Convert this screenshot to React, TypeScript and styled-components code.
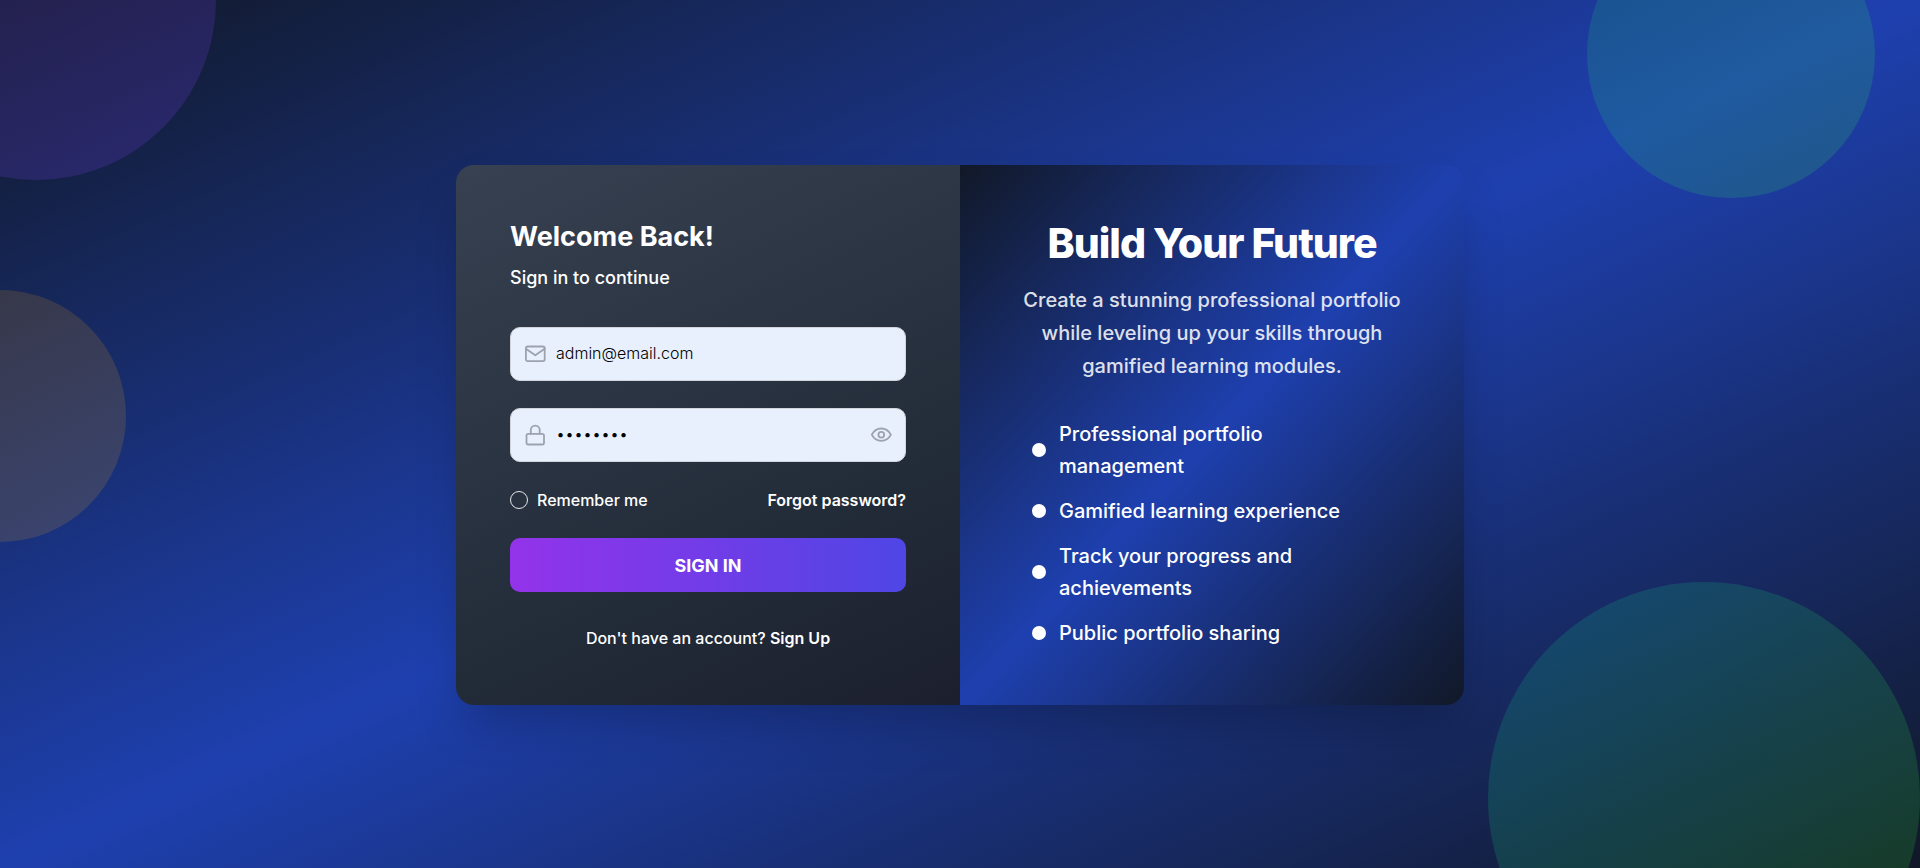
import { useState } from "react";
import styled, { createGlobalStyle } from "styled-components";

const GlobalStyle = createGlobalStyle`
  *, *::before, *::after { box-sizing: border-box; }
  body { margin: 0; font-family: Inter, "Liberation Sans", sans-serif; font-size: 18px; font-weight: 500; color: #fff; background: #111827; }
  h1, h2, p, ul { margin: 0; padding: 0; }
  button, input { font-family: inherit; }
`;

const Page = styled.div`
  position: relative;
  display: flex;
  align-items: center;
  justify-content: center;
  min-height: 100vh;
  padding: 20px 18px 18px;
  overflow: hidden;
  background: linear-gradient(to bottom right, #111827, #1e40af, #111827);
`;

const Orb = styled.div<{ $size: number; $from: string; $to: string }>`
  position: absolute;
  width: ${(p) => p.$size}px;
  height: ${(p) => p.$size}px;
  border-radius: 50%;
  background: linear-gradient(to bottom right, ${(p) => p.$from}, ${(p) => p.$to});
`;
const PurpleOrb = styled(Orb)` top: -180px; left: -144px; `;
const AmberOrb = styled(Orb)` top: calc(100% / 3 + 1px); left: -126px; `;
const TealOrb = styled(Orb)` top: -90px; right: 45px; `;
const GreenOrb = styled(Orb)` bottom: -146px; right: 0; `;

const Card = styled.main`
  position: relative;
  display: grid;
  grid-template-columns: 1fr 1fr;
  width: 100%;
  max-width: 1008px;
  border-radius: 18px;
  overflow: hidden;
  box-shadow: 0 25px 50px -12px rgba(0, 0, 0, 0.25);
  @media (max-width: 800px) { grid-template-columns: 1fr; }
`;

const FormPanel = styled.section`
  padding: 54px 54px 56px;
  background: linear-gradient(155deg, #374151, #222b38 68%, #1c1f2e);
`;

const Title = styled.h2`
  font-size: 27px;
  line-height: 36px;
  font-weight: 700;
`;
const Subtitle = styled.p`
  margin-top: 9px;
  font-size: 18px;
  line-height: 27px;
`;
const Form = styled.form`
  display: flex;
  flex-direction: column;
  gap: 27px;
  margin-top: 36px;
`;

const Field = styled.label`
  display: flex;
  align-items: center;
  height: 54px;
  padding: 0 13px 0 14px;
  gap: 9px;
  color: #9ca3af;
  border: 1px solid #d1d5db;
  border-radius: 10px;
  background: #e8f0fe;
`;
const FieldInput = styled.input`
  flex: 1;
  min-width: 0;
  padding: 0 0 2px;
  border: 0;
  outline: 0;
  background: transparent;
  color: #000;
  font-size: 16px;
  font-weight: 300;
  line-height: 22px;
`;
const IconButton = styled.button`
  display: flex;
  padding: 0;
  border: 0;
  background: none;
  color: inherit;
  cursor: pointer;
`;

const Options = styled.div`
  display: flex;
  align-items: center;
  justify-content: space-between;
  font-size: 16px;
  line-height: 22px;
`;
const Remember = styled.label`
  display: flex;
  align-items: center;
  gap: 9px;
`;
const Tick = styled.input`
  appearance: none;
  width: 18px;
  height: 18px;
  margin: 0;
  border: 1px solid #e5e7eb;
  border-radius: 50%;
  &:checked { background: #9333ea; }
`;
const TextLink = styled.a`
  color: inherit;
  font-weight: 600;
  text-decoration: none;
`;
const Submit = styled.button`
  height: 54px;
  border: 0;
  border-radius: 10px;
  color: #fff;
  font-size: 18px;
  font-weight: 700;
  background: linear-gradient(to right, #9333ea, #4f46e5);
  cursor: pointer;
`;
const SignUp = styled.p`
  margin-top: 35px;
  text-align: center;
  font-size: 16px;
  line-height: 22px;
`;

const PromoPanel = styled.section`
  display: flex;
  flex-direction: column;
  align-items: center;
  justify-content: center;
  padding: 54px 54px 55px;
  background: linear-gradient(to bottom right, #111827, #1e40af, #111827);
`;
const Headline = styled.h1`
  font-size: 41px;
  line-height: 45px;
  font-weight: 800;
  letter-spacing: -1px;
`;
const Lead = styled.p`
  margin-top: 18px;
  text-align: center;
  font-size: 20px;
  line-height: 33px;
  opacity: 0.85;
`;
const Features = styled.ul`
  display: flex;
  flex-direction: column;
  gap: 13px;
  width: 100%;
  max-width: 360px;
  margin-top: 35px;
  list-style: none;
`;
const Feature = styled.li`
  display: flex;
  align-items: center;
  gap: 13px;
  font-size: 20px;
  line-height: 32px;
  &::before {
    content: "";
    flex: none;
    width: 14px;
    height: 14px;
    border-radius: 50%;
    background: #fff;
  }
`;

const Icon = styled.svg`
  flex: none;
  width: 22px;
  height: 22px;
  fill: none;
  stroke: currentColor;
  stroke-width: 1.8;
  stroke-linecap: round;
  stroke-linejoin: round;
`;

const MailIcon = () => (
  <Icon viewBox="0 0 22 22">
    <rect x="0.9" y="3.5" width="18.8" height="14.6" rx="1.8" />
    <path d="M0.9 5.8 10.3 12.3 19.7 5.8" />
  </Icon>
);
const LockIcon = () => (
  <Icon viewBox="0 0 22 22">
    <rect x="1.5" y="9.8" width="17.5" height="10.7" rx="1.8" />
    <path d="M5.8 9.8V6a4.45 4.45 0 0 1 8.9 0V9.8" />
  </Icon>
);
const EyeIcon = () => (
  <Icon viewBox="0 0 22 22">
    <path d="M1.8 10.7C3.8 6.7 7.4 4.5 11.3 4.5S18.8 6.7 20.9 10.7C18.8 14.7 15.2 16.9 11.3 16.9S3.8 14.7 1.8 10.7Z" />
    <circle cx="11.3" cy="10.7" r="2.9" />
  </Icon>
);

const features = [
  "Professional portfolio management",
  "Gamified learning experience",
  "Track your progress and achievements",
  "Public portfolio sharing",
];

export default function App() {
  const [visible, setVisible] = useState(false);
  return (
    <>
      <GlobalStyle />
      <Page>
        <PurpleOrb $size={360} $from="rgba(99, 80, 235, 0.2)" $to="rgba(124, 58, 237, 0.2)" />
        <AmberOrb $size={252} $from="rgba(245, 158, 11, 0.15)" $to="rgba(245, 170, 11, 0.15)" />
        <TealOrb $size={288} $from="rgba(16, 185, 129, 0.2)" $to="rgba(52, 205, 80, 0.2)" />
        <GreenOrb $size={432} $from="rgba(6, 182, 150, 0.2)" $to="rgba(56, 205, 30, 0.2)" />
        <Card>
          <FormPanel>
            <Title>Welcome Back!</Title>
            <Subtitle>Sign in to continue</Subtitle>
            <Form onSubmit={(e) => e.preventDefault()}>
              <Field>
                <MailIcon />
                <FieldInput type="email" aria-label="Email" defaultValue="admin@email.com" />
              </Field>
              <Field>
                <LockIcon />
                <FieldInput type={visible ? "text" : "password"} aria-label="Password" defaultValue="password" />
                <IconButton type="button" aria-label="Show password" onClick={() => setVisible(!visible)}>
                  <EyeIcon />
                </IconButton>
              </Field>
              <Options>
                <Remember>
                  <Tick type="checkbox" />
                  Remember me
                </Remember>
                <TextLink href="#forgot">Forgot password?</TextLink>
              </Options>
              <Submit type="submit">SIGN IN</Submit>
            </Form>
            <SignUp>
              Don't have an account? <TextLink href="#signup">Sign Up</TextLink>
            </SignUp>
          </FormPanel>
          <PromoPanel>
            <Headline>Build Your Future</Headline>
            <Lead>
              Create a stunning professional portfolio while leveling up your skills through gamified learning modules.
            </Lead>
            <Features>
              {features.map((text) => (
                <Feature key={text}>{text}</Feature>
              ))}
            </Features>
          </PromoPanel>
        </Card>
      </Page>
    </>
  );
}
